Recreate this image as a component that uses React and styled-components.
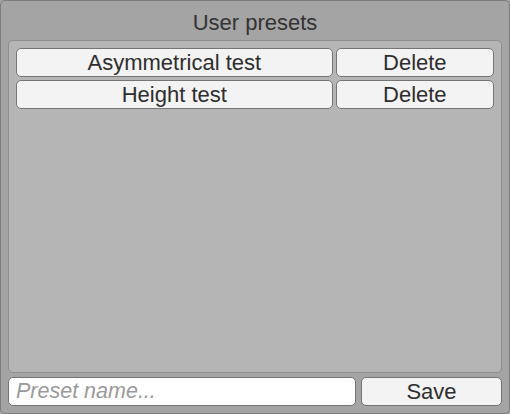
import React from 'react';
import styled, { createGlobalStyle } from 'styled-components';

const GlobalStyle = createGlobalStyle`
  html, body {
    margin: 0;
    padding: 0;
    background: #a4a4a4;
  }
  * {
    box-sizing: border-box;
  }
`;

const Window = styled.div`
  width: 510px;
  height: 414px;
  display: flex;
  flex-direction: column;
  background: #a4a4a4;
  border: 1px solid #7c7c7c;
  border-radius: 5px;
  padding: 0 7px 7px 7px;
  font-family: 'Liberation Sans', Arial, sans-serif;
  color: #2e2e2e;
`;

const Title = styled.div`
  height: 39px;
  display: flex;
  align-items: center;
  justify-content: center;
  font-size: 22px;
  padding-top: 4px;
  color: #333333;
`;

const Panel = styled.div`
  flex: 1;
  display: flex;
  flex-direction: column;
  gap: 3px;
  background: #b5b5b5;
  border: 1px solid #8e8e8e;
  border-radius: 5px;
  padding: 7px 7px;
`;

const Row = styled.div`
  display: grid;
  grid-template-columns: 2fr 1fr;
  gap: 3px;
`;

const Button = styled.button`
  height: 29px;
  margin: 0;
  padding: 0;
  background: #f3f3f3;
  border: 1px solid #747474;
  border-radius: 5px;
  font-family: inherit;
  font-size: 22px;
  color: #2e2e2e;
  line-height: 1;
  cursor: pointer;
`;

const Footer = styled.div`
  display: flex;
  gap: 5px;
  margin-top: 4px;
`;

const NameInput = styled.input`
  flex: 1;
  height: 29px;
  margin: 0;
  padding: 0 7px;
  background: #ffffff;
  border: 1px solid #747474;
  border-radius: 5px;
  font-family: inherit;
  font-size: 21.5px;
  color: #2e2e2e;
  outline: none;

  &::placeholder {
    color: #9a9a9a;
    font-style: italic;
  }
`;

const SaveButton = styled(Button)`
  width: 141px;
`;

const presets = ['Asymmetrical test', 'Height test'];

export default function App() {
  return (
    <>
      <GlobalStyle />
      <Window>
        <Title>User presets</Title>
        <Panel>
          {presets.map((name) => (
            <Row key={name}>
              <Button>{name}</Button>
              <Button>Delete</Button>
            </Row>
          ))}
        </Panel>
        <Footer>
          <NameInput placeholder="Preset name..." />
          <SaveButton>Save</SaveButton>
        </Footer>
      </Window>
    </>
  );
}
